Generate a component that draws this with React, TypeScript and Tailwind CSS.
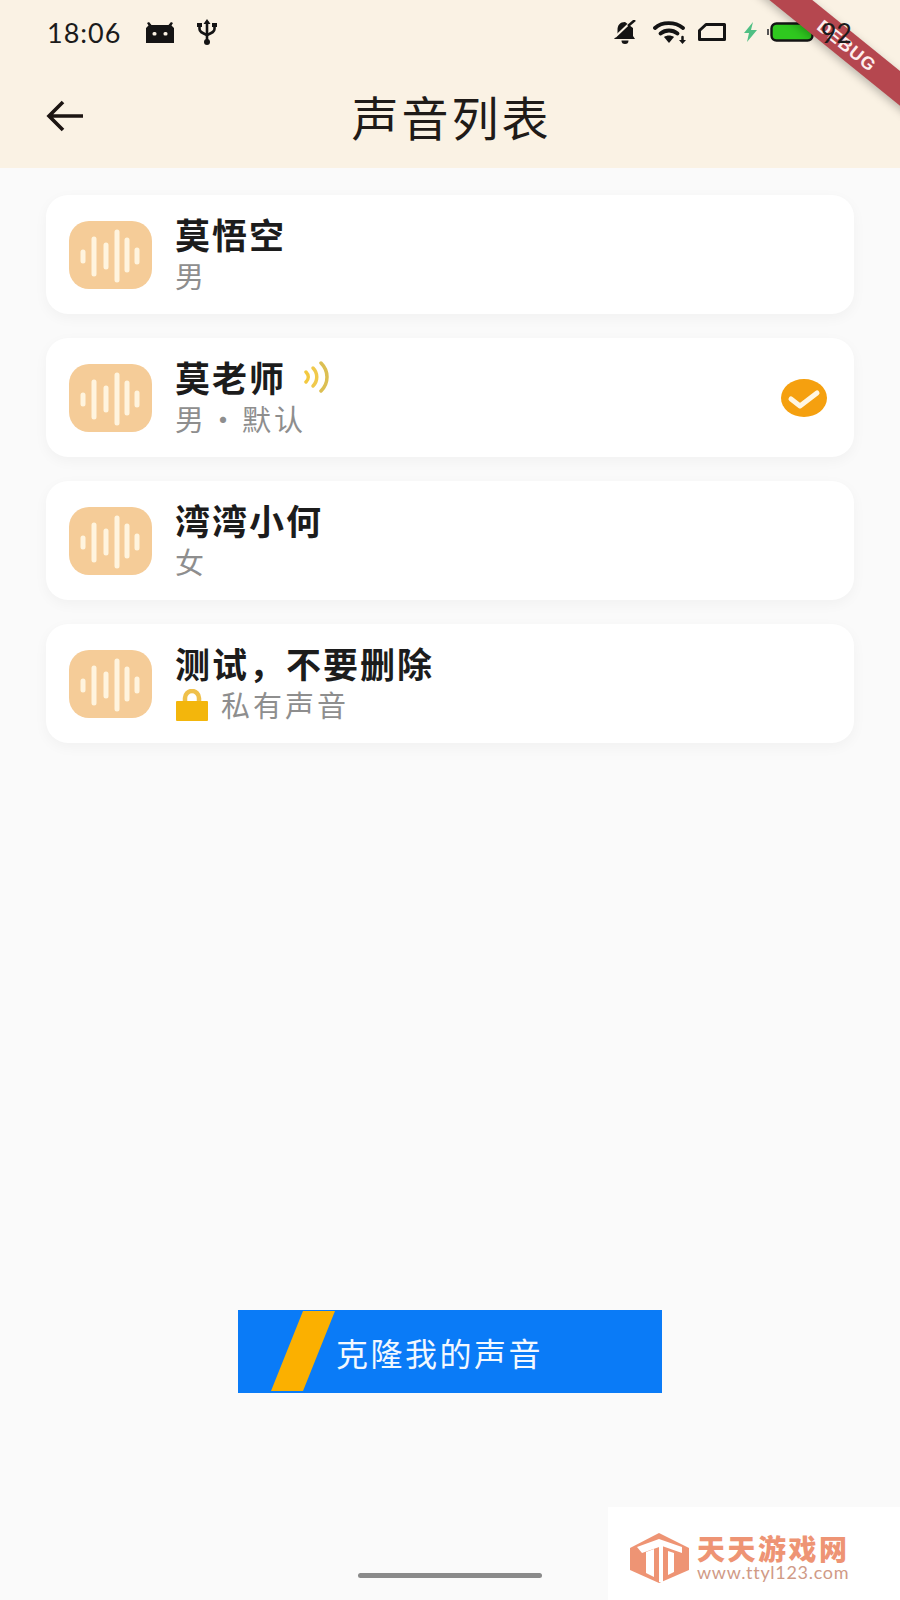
const CJK = 'font-["Noto_Sans_CJK_SC","Noto_Sans",sans-serif]';

const voices = [
  { name: '莫悟空', sub: '男' },
  { name: '莫老师', sub: '男 • 默认', playing: true, selected: true },
  { name: '湾湾小何', sub: '女' },
  { name: '测试，不要删除', sub: '私有声音', locked: true },
];

function VoiceIcon() {
  const bars = [
    [14, 31, 40],
    [25, 18, 53],
    [37, 24, 46],
    [48, 11, 59],
    [58, 19, 49],
    [68, 29, 41],
  ];
  return (
    <div className="w-[83px] h-[68px] shrink-0 rounded-[20px] bg-[#f5cc98]">
      <svg width="83" height="68" viewBox="0 0 83 68">
        {bars.map(([x, y1, y2]) => (
          <line key={x} x1={x} x2={x} y1={y1} y2={y2} stroke="#fff4de" strokeWidth="5" strokeLinecap="round" />
        ))}
      </svg>
    </div>
  );
}

function SoundWave() {
  return (
    <svg width="28" height="32" viewBox="0 0 28 32" fill="none" strokeLinecap="round">
      <path d="M2 11c3 3 3 7 0 10" stroke="#f3c93f" strokeWidth="3.500" />
      <path d="M9 7c5 5 5 13 0 18" stroke="#f0c94c" strokeWidth="3.500" />
      <path d="M17 2c8 8 8 20 0 28" stroke="#dcbf52" strokeWidth="3.500" />
    </svg>
  );
}

function CheckBadge() {
  return (
    <svg width="46" height="38" viewBox="0 0 46 38">
      <ellipse cx="23" cy="19" rx="23" ry="19" fill="#f5a00f" />
      <path d="M10 20l9 7 17-13" fill="none" stroke="#fff6e2" strokeWidth="5" strokeLinecap="round" strokeLinejoin="round" />
    </svg>
  );
}

function LockIcon() {
  return (
    <svg width="32" height="32" viewBox="0 0 32 32" className="shrink-0 ml-[1px]">
      <path d="M9 14V9a7 7 0 0114 0v5" fill="none" stroke="#efc04a" strokeWidth="4.500" />
      <rect x="0" y="12" width="32" height="20" rx="1" fill="#f3b60c" />
    </svg>
  );
}

function StatusBar() {
  return (
    <div className="h-[64px] flex items-center pl-[47px] pr-[48px] text-[#1b1b1b]">
      <span className="font-['Lato',sans-serif] text-[27px] tracking-[1px] w-[99px] leading-none">18:06</span>
      <svg width="28" height="21" viewBox="0 0 28 21">
        <path d="M0 21V6l2.500-2.500L1 1l2-1 2.500 3h17L25 0l2 1-1.500 2.500L28 6v15z" fill="#141414" />
        <rect x="6.500" y="10" width="4" height="3.500" rx="1.500" fill="#faf2e4" />
        <rect x="17.500" y="10" width="4" height="3.500" rx="1.500" fill="#faf2e4" />
      </svg>
      <svg width="20" height="26" viewBox="0 0 20 26" className="ml-[23px]" fill="none" stroke="#141414" strokeWidth="2.600">
        <path d="M10 2v21" />
        <path d="M10 0L6.500 5h7z" fill="#141414" stroke="none" />
        <path d="M2.500 7v3c0 3 3 4 7.500 6M17.500 7v3c0 3-3 4-7.500 6" />
        <rect x="0" y="4" width="5" height="4" fill="#141414" stroke="none" />
        <rect x="15" y="4" width="5" height="4" fill="#141414" stroke="none" />
        <circle cx="10" cy="23" r="3" fill="#141414" stroke="none" />
      </svg>
      <div className="flex-1" />
      <svg width="24" height="24" viewBox="0 0 24 24">
        <path d="M12 2C7 2 4.500 5 4.500 10v5L1 19h21l-2-3V8z" fill="#141414" />
        <path d="M8.500 20.500a3.500 3.500 0 007 0z" fill="#141414" />
        <path d="M2 17L19 1" stroke="#faf2e4" strokeWidth="2" />
        <path d="M15 6l7-6" stroke="#141414" strokeWidth="2.500" />
      </svg>
      <svg width="34" height="24" viewBox="0 0 34 24" className="ml-[16px]" fill="none" stroke="#141414" strokeWidth="3.800" strokeLinecap="round">
        <path d="M2 8C9 1.500 22 1.500 30 8" />
        <path d="M7.500 13.500c5-4 12-4 17 0" />
        <path d="M11 17l5 6 5-6c-2.500-2-7.500-2-10 0z" fill="#141414" stroke="none" />
        <path d="M29.500 17v3" strokeWidth="2.500" />
        <path d="M26 20h7l-3.500 4z" fill="#141414" stroke="none" />
      </svg>
      <svg width="28" height="18" viewBox="0 0 28 18" className="ml-[11px] mr-[1px]" fill="none" stroke="#141414" strokeWidth="3">
        <path d="M8 1.500h18.500v15H1.500V7.500z" strokeLinejoin="round" />
      </svg>
      <svg width="15" height="20" viewBox="0 0 15 20" className="ml-[16px]">
        <path d="M10 0L1 11h5l-2 9 10-12H8z" fill="#4fbf83" />
      </svg>
      <svg width="47" height="20" viewBox="0 0 47 20" className="ml-[9px]">
        <rect x="0" y="7" width="2" height="6" fill="#555" />
        <rect x="4.500" y="1.500" width="41" height="17" rx="5" fill="#2fc81f" stroke="#141414" strokeWidth="2.400" />
      </svg>
      <span className="relative z-20 ml-[7px] font-['Lato',sans-serif] text-[27px] leading-none">92</span>
    </div>
  );
}

function DebugRibbon() {
  return (
    <div className="absolute z-10 left-[737px] top-[32px] w-[220px] h-[27px] rotate-[39deg] bg-[#b5474f] shadow-[0_3px_8px_rgba(0,0,0,0.25)] flex items-center justify-center">
      <span className="font-['Liberation_Sans',sans-serif] font-bold text-[18px] tracking-[1px] text-[#fdeeee] leading-none">DEBUG</span>
    </div>
  );
}

function Watermark() {
  return (
    <div className="absolute right-0 bottom-0 w-[292px] h-[93px] bg-white pl-[22px] pt-[26px] flex items-start">
      <svg width="59" height="50" viewBox="0 0 59 50" className="shrink-0">
        <path d="M29 0l30 15v22L29 50 0 37V15z" fill="#ee9474" />
        <path d="M7 14L29 6l23 8v6L32 13 12 20z" fill="#ffffff" />
        <path d="M16 19l8-3v28l-8-4zM38 18l6 2v19l-6 3zM29 13h4v36h-4z" fill="#ffffff" />
      </svg>
      <div className="ml-[8px] flex flex-col">
        <span className={`${CJK} text-[28px] font-black leading-[30px] tracking-[2.500px] text-[#ee9474]`}>天天游戏网</span>
        <span className="font-['Lato',sans-serif] text-[18px] leading-[20px] tracking-[0.700px] text-[#d09a86] -mt-[1px]">www.ttyl123.com</span>
      </div>
    </div>
  );
}

export default function App() {
  return (
    <div className={`${CJK} relative w-[900px] h-[1600px] overflow-hidden bg-[#fafafa] flex flex-col`}>
      <header className="h-[168px] bg-[#faf2e4]">
        <StatusBar />
        <div className="relative h-[104px] flex items-center justify-center">
          <svg width="38" height="32" viewBox="0 0 38 32" className="absolute left-[46px] top-[36px]" fill="none" stroke="#1c1512" strokeWidth="3.600">
            <path d="M37 16H3M17 2L3 16l14 14" />
          </svg>
          <h1 className="text-[47px] leading-none tracking-[3px] font-normal text-[#1f1b18] -mt-[2px] ml-[3px]">声音列表</h1>
        </div>
      </header>
      <DebugRibbon />

      <main className="px-[46px] pt-[27px] flex flex-col gap-[24px]">
        {voices.map((v) => (
          <div key={v.name} className="h-[119px] rounded-[22px] bg-white shadow-[0_4px_14px_rgba(0,0,0,0.04)] flex items-center pl-[23px] pr-[27px]">
            <VoiceIcon />
            <div className="ml-[23px] flex-1 flex flex-col">
              <div className="flex items-center h-[42px] -mt-[1px]">
                <span className="text-[35px] leading-none tracking-[2px] font-semibold text-[#1c1c1c]">{v.name}</span>
                {v.playing && <span className="ml-[18px]"><SoundWave /></span>}
              </div>
              <div className="flex items-center h-[40px] mt-[1px] text-[#8e8e8e]">
                {v.locked && <LockIcon />}
                <span className={`text-[29px] leading-none tracking-[3px] [word-spacing:-8px] ${v.locked ? 'ml-[13px]' : ''}`}>{v.sub}</span>
              </div>
            </div>
            {v.selected && <CheckBadge />}
          </div>
        ))}
      </main>

      <div className="flex-1" />

      <div className="self-center mb-[207px] relative w-[424px] h-[83px] bg-[#0a7bf7] flex items-center pl-[98px]">
        <svg width="66" height="80" viewBox="0 0 66 80" className="absolute left-[33px] top-[1px]">
          <path d="M32 0h32L32 80H0z" fill="#fbb000" />
        </svg>
        <span className="text-[32px] leading-none tracking-[2.500px] text-[#f2f8ff]">克隆我的声音</span>
      </div>

      <div className="absolute left-[358px] bottom-[22px] w-[184px] h-[5px] rounded-full bg-[#8a8a8a]" />
      <Watermark />
    </div>
  );
}
